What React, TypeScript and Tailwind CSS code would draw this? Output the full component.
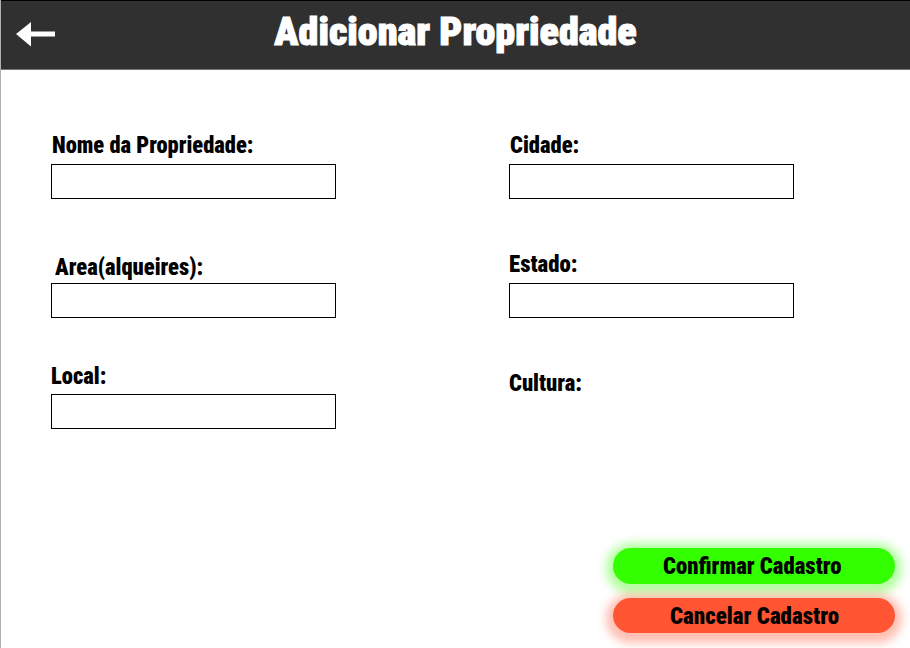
type FieldProps = { label: string; labelClass: string; boxClass?: string };

function Field({ label, labelClass, boxClass }: FieldProps) {
  return (
    <div className="flex flex-col items-start">
      <label className={`block origin-left whitespace-nowrap text-[23.5px] leading-6 ${labelClass}`}>{label}</label>
      {boxClass && <input type="text" className={`block h-[35px] w-[285px] border border-black bg-white outline-none ${boxClass}`} />}
    </div>
  );
}

export default function App() {
  return (
    <div className="flex h-[648px] w-[910px] flex-col overflow-hidden border-l border-[#b0b0b0] bg-white font-['Roboto_Condensed',Roboto,sans-serif] font-black text-black">
      <header className="-ml-px grid h-[70px] shrink-0 grid-cols-[70px_1fr_70px] border-t border-b border-t-black border-b-[#777777] bg-[#303030]">
        <button className="flex items-start pt-[21px] pl-4" aria-label="Voltar">
          <svg width="40" height="25" viewBox="0 0 40 25" fill="white">
            <path d="M0 12 15 0V9.500H39V14.500H15V24.500Z" />
          </svg>
        </button>
        <h1 className="scale-x-[1.056] pt-1.5 pl-px text-center text-[38px] leading-[50px] whitespace-nowrap text-white [-webkit-text-stroke:1px_white]">
          Adicionar Propriedade
        </h1>
      </header>

      <main className="grid grow grid-cols-[458px_1fr] pt-[63px] pl-[50px]">
        <section className="flex flex-col">
          <Field label="Nome da Propriedade:" labelClass="ml-px scale-x-[0.957]" boxClass="mt-[7px]" />
          <Field label="Area(alqueires):" labelClass="mt-14 ml-1 scale-x-[0.96]" boxClass="mt-1" />
          <Field label="Local:" labelClass="mt-[46px] scale-x-[0.96]" boxClass="mt-1.5" />
        </section>
        <section className="flex flex-col">
          <Field label="Cidade:" labelClass="ml-px scale-x-[0.96]" boxClass="mt-[7px]" />
          <Field label="Estado:" labelClass="mt-[53px] scale-x-[0.97]" boxClass="mt-[7px]" />
          <Field label="Cultura:" labelClass="mt-[53px] scale-x-[0.96]" />
        </section>
      </main>

      <footer className="flex shrink-0 flex-col items-end gap-3.5 pr-[15.5px] pb-[15px] text-[23.5px] leading-9">
        <button className="h-9 w-[282px] rounded-full bg-[#33ff00] shadow-[0_2px_10px_7px_rgba(51,255,0,0.38)]">
          <span className="inline-block scale-x-[0.968] pr-0.5">Confirmar Cadastro</span>
        </button>
        <button className="h-[35px] w-[282px] rounded-full bg-[#ff5533] shadow-[0_3px_10px_7px_rgba(255,85,51,0.38)]">
          <span className="inline-block scale-x-[0.977] pl-0.5">Cancelar Cadastro</span>
        </button>
      </footer>
    </div>
  );
}
